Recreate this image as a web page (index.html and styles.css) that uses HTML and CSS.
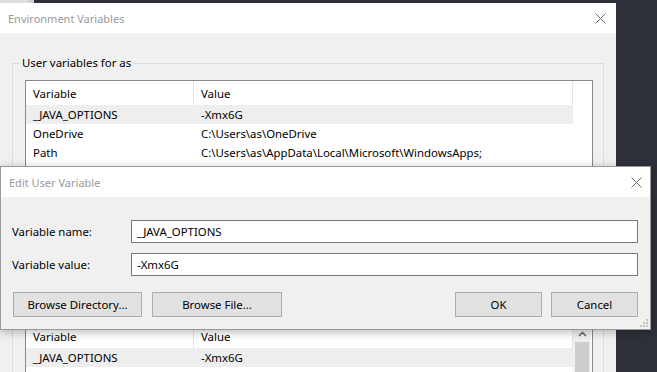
FILE: index.html
```html
<!DOCTYPE html>
<html lang="en">
<head>
  <meta charset="UTF-8">
  <title>Environment Variables</title>
  <link rel="stylesheet" href="styles.css">
</head>
<body>
  <div class="desktop">
    <div class="peek"></div>

    <div class="window main-window">
      <div class="titlebar">
        <span class="title">Environment Variables</span>
        <svg class="close" width="11" height="11" viewBox="0 0 11 11"><path d="M0.5 0.5 L10.5 10.5 M10.5 0.5 L0.5 10.5" stroke="#6b6b6b" stroke-width="1" fill="none"/></svg>
      </div>
      <div class="window-body">
        <fieldset class="group user-group">
          <legend>User variables for as</legend>
          <div class="list user-list">
            <div class="list-main">
              <div class="list-head">
                <div class="col-name">Variable</div>
                <div class="col-value">Value</div>
              </div>
              <div class="list-row selected">
                <div class="col-name">_JAVA_OPTIONS</div>
                <div class="col-value">-Xmx6G</div>
              </div>
              <div class="list-row">
                <div class="col-name">OneDrive</div>
                <div class="col-value">C:\Users\as\OneDrive</div>
              </div>
              <div class="list-row">
                <div class="col-name">Path</div>
                <div class="col-value">C:\Users\as\AppData\Local\Microsoft\WindowsApps;</div>
              </div>
            </div>
          </div>
          <div class="group-buttons">
            <button class="btn">New...</button>
            <button class="btn">Edit...</button>
            <button class="btn">Delete</button>
          </div>
        </fieldset>

        <fieldset class="group system-group">
          <legend>System variables</legend>
          <div class="list system-list">
            <div class="list-main">
              <div class="list-head">
                <div class="col-name">Variable</div>
                <div class="col-value">Value</div>
              </div>
              <div class="list-row selected">
                <div class="col-name">_JAVA_OPTIONS</div>
                <div class="col-value">-Xmx6G</div>
              </div>
            </div>
            <div class="scrollbar">
              <svg class="arrow" width="9" height="6" viewBox="0 0 9 6"><path d="M1 5 L4.5 1.5 L8 5" stroke="#606060" stroke-width="1.5" fill="none"/></svg>
              <div class="thumb"></div>
            </div>
          </div>
        </fieldset>
      </div>
    </div>

    <div class="window dialog">
      <div class="titlebar">
        <span class="title">Edit User Variable</span>
        <svg class="close" width="11" height="11" viewBox="0 0 11 11"><path d="M0.5 0.5 L10.5 10.5 M10.5 0.5 L0.5 10.5" stroke="#6b6b6b" stroke-width="1" fill="none"/></svg>
      </div>
      <div class="dialog-body">
        <div class="field">
          <label>Variable name:</label>
          <div class="input">_JAVA_OPTIONS</div>
        </div>
        <div class="field">
          <label>Variable value:</label>
          <div class="input">-Xmx6G</div>
        </div>
        <div class="dialog-buttons">
          <button class="btn wide">Browse Directory...</button>
          <button class="btn wide">Browse File...</button>
          <span class="spacer"></span>
          <button class="btn">OK</button>
          <button class="btn">Cancel</button>
        </div>
      </div>
      <svg class="grip" width="8" height="8" viewBox="0 0 8 8">
        <rect x="6" y="0" width="2" height="2" fill="#c4c4c4"/>
        <rect x="3" y="3" width="2" height="2" fill="#c4c4c4"/>
        <rect x="6" y="3" width="2" height="2" fill="#c4c4c4"/>
        <rect x="0" y="6" width="2" height="2" fill="#c4c4c4"/>
        <rect x="3" y="6" width="2" height="2" fill="#c4c4c4"/>
        <rect x="6" y="6" width="2" height="2" fill="#c4c4c4"/>
      </svg>
    </div>
  </div>
</body>
</html>
```

FILE: styles.css
```css
* {margin: 0; padding: 0; box-sizing: border-box;}
body {
  font-family: 'Noto Sans', 'Liberation Sans', sans-serif;
  font-size: 11.4px;
  color: #000;
  background: #2e3139;
  width: 657px;
  height: 372px;
  overflow: hidden;
}
.desktop {
  position: relative;
  width: 657px;
  height: 372px;
}
.peek {
  position: absolute;
  left: 0;
  top: 0;
  width: 34px;
  height: 3px;
  background: #dedede;
  border-right: 6px solid #cfcfcf;
}

/* windows */
.window {
  position: absolute;
  background: #f0f0f0;
}
.main-window {
  left: 0;
  top: 3px;
  width: 616px;
  height: 420px;
}
.titlebar {
  height: 30px;
  background: #fff;
  display: flex;
  align-items: center;
  justify-content: space-between;
  padding: 0 10px 0 8px;
}
.title {
  color: #9a9a9a;
  font-size: 11px;
}
.window-body {
  padding: 22px 12px 0 12px;
}

/* group boxes */
.group {
  border: 1px solid #dcdcdc;
  padding: 9px 10px 10px 12px;
}
.group legend {
  margin-left: -5px;
  padding: 0 2px;
  line-height: 16px;
}
.system-group {
  margin-top: 3px;
}
.group-buttons {
  display: flex;
  justify-content: flex-end;
  gap: 8px;
  margin-top: 8px;
}

/* list views */
.list {
  border: 1px solid #828790;
  background: #fff;
  display: flex;
}
.user-list {
  height: 171px;
}
.system-list {
  height: 120px;
}
.list-main {
  width: 547px;
}
.list-head, .list-row {
  display: flex;
  align-items: center;
}
.list-head {
  height: 24px;
}
.list-row {
  height: 19px;
}
.list-row.selected {
  background: #eeeeee;
}
.col-name {
  width: 168px;
  padding-left: 7px;
  white-space: nowrap;
}
.col-value {
  flex: 1;
  padding-left: 7px;
  white-space: nowrap;
}
.list-head .col-name, .list-head .col-value {
  height: 100%;
  display: flex;
  align-items: center;
  border-right: 1px solid #e5e5e5;
}
.scrollbar {
  width: 18px;
  background: #f0f0f0;
  display: flex;
  flex-direction: column;
  align-items: center;
}
.scrollbar .arrow {
  margin-top: 7px;
}
.scrollbar .thumb {
  width: 14px;
  height: 60px;
  margin-top: 5px;
  background: #cdcdcd;
}

/* buttons */
.btn {
  font-family: inherit;
  font-size: 11.4px;
  color: #000;
  background: #e1e1e1;
  border: 1px solid #adadad;
  height: 25px;
  width: 87px;
}
.btn.wide {
  width: 129px;
}

/* edit dialog */
.dialog {
  left: 0;
  top: 166px;
  width: 651px;
  height: 164px;
  border: 1px solid #9a9a9a;
  box-shadow: 0 2px 9px rgba(0, 0, 0, 0.28);
}
.dialog .titlebar {
  padding-right: 8px;
}
.dialog-body {
  padding: 23px 12px 0 11px;
  display: flex;
  flex-direction: column;
  gap: 10px;
}
.field {
  display: grid;
  grid-template-columns: 119px 1fr;
  align-items: center;
}
.input {
  height: 23px;
  background: #fff;
  border: 1px solid #7a7a7a;
  padding-left: 5px;
  display: flex;
  align-items: center;
}
.dialog-buttons {
  display: flex;
  gap: 10px;
  margin-top: 6px;
  padding-left: 1px;
}
.dialog-buttons .btn + .btn.wide {
  width: 130px;
}
.spacer {
  flex: 1;
}
.dialog-buttons .btn:last-child {
  margin-left: -1px;
}
.grip {
  position: absolute;
  right: 2px;
  bottom: 2px;
}
```
